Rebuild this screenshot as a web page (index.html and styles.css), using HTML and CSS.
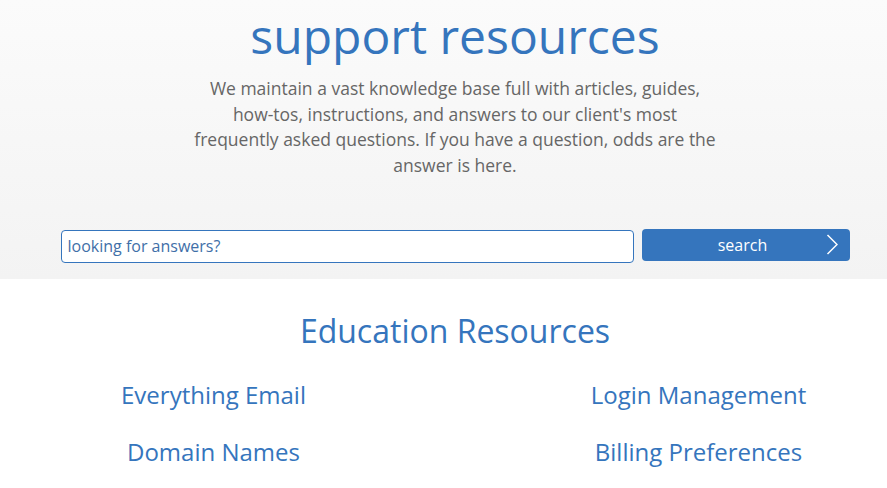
FILE: index.html
```html
<!DOCTYPE html>
<html>
<head>
<meta charset="utf-8">
<link rel="stylesheet" href="styles.css">
</head>
<body>
<div class="page">
<section class="hero">
  <div class="inner hero-inner">
    <h1 class="title">support resources</h1>
    <p class="intro">We maintain a vast knowledge base full with articles, guides, how-tos, instructions, and answers to our client's most frequently asked questions. If you have a question, odds are the answer is here.</p>
    <form class="search">
      <input class="search-input" type="text" placeholder="looking for answers?">
      <button class="search-btn" type="button"><span>search</span>
        <svg class="chev" width="12" height="21" viewBox="0 0 12 21"><path d="M1.5 1 L11 10.5 L1.5 20" fill="none" stroke="#fff" stroke-width="1.5"/></svg>
      </button>
    </form>
  </div>
</section>
<section class="edu">
  <div class="inner">
    <h2 class="edu-title">Education Resources</h2>
    <div class="links">
      <a class="link" href="#">Everything Email</a>
      <a class="link" href="#">Login Management</a>
      <a class="link" href="#">Domain Names</a>
      <a class="link" href="#">Billing Preferences</a>
    </div>
  </div>
</section>
</div>
</body>
</html>
```
FILE: styles.css
```css
html, body { margin: 0; padding: 0; }
body {
  font-family: "Open Sans", "Liberation Sans", sans-serif;
  background: #fff;
}
.page {
  width: 887px;
  overflow: hidden;
}
.inner {
  width: 910px;
}
.hero {
  height: 279px;
  background: linear-gradient(#fbfbfb, #f3f3f3);
}
.hero-inner {
  display: flex;
  flex-direction: column;
  align-items: center;
  padding-top: 6px;
}
.title {
  margin: 0;
  font-weight: 400;
  font-size: 48px;
  line-height: 60px;
  color: #3575bd;
}
.intro {
  margin: 10px 0 0;
  width: 526px;
  text-align: center;
  font-size: 17.5px;
  line-height: 25.7px;
  color: #666;
}
.search {
  margin-top: 50px;
  display: flex;
  align-items: flex-start;
  width: 789px;
  gap: 8px;
}
.search-input {
  flex: 0 0 573px;
  height: 33px;
  box-sizing: border-box;
  border: 1px solid #3575bd;
  border-radius: 4px;
  background: #fff;
  padding: 0 6px;
  font-family: inherit;
  font-size: 16px;
  color: #333;
  margin-top: 1px;
  outline: none;
}
.search-input::placeholder { color: #3f6fa8; }
.search-btn {
  flex: 0 0 208px;
  height: 32px;
  border: 0;
  border-radius: 4px;
  background: #3575bd;
  color: #fff;
  font-family: inherit;
  font-size: 16px;
  position: relative;
  padding: 0 6px 0 0;
}
.search-btn span { display: block; line-height: 32px; }
.chev { position: absolute; right: 12px; top: 5px; }
.edu {
  padding-top: 30px;
}
.edu-title {
  margin: 0;
  text-align: center;
  font-weight: 400;
  font-size: 32px;
  line-height: 44px;
  color: #3575bd;
}
.links {
  margin: 25px -30px 0 -29px;
  display: grid;
  grid-template-columns: 485px 485px;
  row-gap: 24px;
}
.link {
  text-align: center;
  font-size: 24px;
  line-height: 33px;
  color: #3575bd;
  text-decoration: none;
}
```
